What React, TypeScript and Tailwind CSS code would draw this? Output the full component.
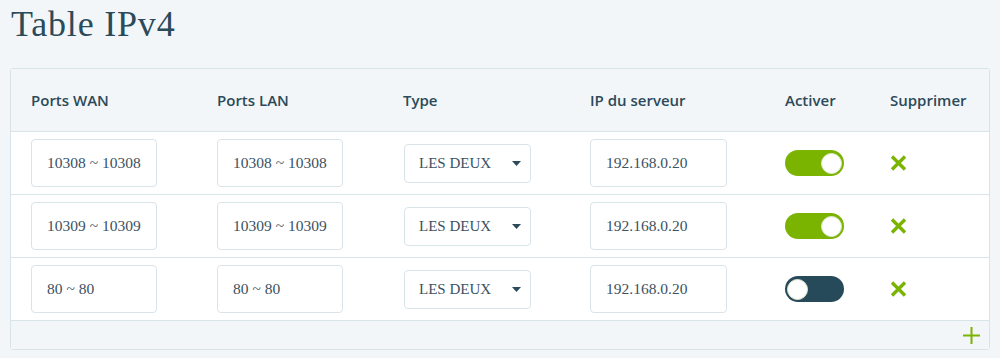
import { useState } from 'react';

type Rule = { wan: string; lan: string; type: string; ip: string; on: boolean };

const initialRules: Rule[] = [
  { wan: '10308 ~ 10308', lan: '10308 ~ 10308', type: 'LES DEUX', ip: '192.168.0.20', on: true },
  { wan: '10309 ~ 10309', lan: '10309 ~ 10309', type: 'LES DEUX', ip: '192.168.0.20', on: true },
  { wan: '80 ~ 80', lan: '80 ~ 80', type: 'LES DEUX', ip: '192.168.0.20', on: false },
];

const headers = ['Ports WAN', 'Ports LAN', 'Type', 'IP du serveur', 'Activer', 'Supprimer'];

const grid = 'grid grid-cols-[186px_186px_187px_195px_105px_1fr] items-center pl-5';

function TextBox({ value, wide }: { value: string; wide?: boolean }) {
  return (
    <div
      className={`flex h-[48px] items-center rounded border border-[#d9e3ea] bg-white pl-[15px] text-[15.5px] text-[#3b5262] ${
        wide ? 'w-[137px]' : 'w-[126px]'
      }`}
      style={{ fontFamily: '"Liberation Serif", serif' }}
    >
      {value}
    </div>
  );
}

function Toggle({ on, onClick }: { on: boolean; onClick: () => void }) {
  return (
    <button
      onClick={onClick}
      className={`flex h-[26px] w-[59px] items-center rounded-full px-[2px] ${
        on ? 'justify-end bg-[#7ab300]' : 'justify-start bg-[#274a5b]'
      }`}
    >
      <span className="h-[21px] w-[21px] rounded-full border border-[#dfe8d0] bg-white" />
    </button>
  );
}

export default function App() {
  const [rules, setRules] = useState(initialRules);

  const flip = (i: number) =>
    setRules((r) => r.map((x, j) => (j === i ? { ...x, on: !x.on } : x)));

  return (
    <div
      className="h-[358px] w-full bg-[#f3f6f8] px-[10px]"
      style={{ fontFamily: '"Open Sans", sans-serif' }}
    >
      <div className="flex h-[68px] items-start">
        <h1
          className="mt-[2px] pl-[1px] text-[36px] leading-[44px] tracking-[0.8px] text-[#2b4a5a]"
          style={{ fontFamily: '"Liberation Serif", serif' }}
        >
          Table IPv4
        </h1>
      </div>

      <div className="overflow-hidden rounded-[3px] border border-[#d9e3ea] bg-white">
        <div className={`${grid} h-[63px] border-b border-[#d9e3ea] bg-[#f3f6f8]`}>
          {headers.map((h) => (
            <div key={h} className="text-[15px] font-semibold text-[#2b4a5a]">
              {h}
            </div>
          ))}
        </div>

        {rules.map((r, i) => (
          <div key={i} className={`${grid} h-[63px] border-b border-[#d9e3ea]`}>
            <TextBox value={r.wan} />
            <TextBox value={r.lan} />
            <div
              className="ml-[1px] flex h-[39px] w-[127px] items-center justify-between rounded border border-[#d9e3ea] pl-[14px] pr-[9px] text-[15px] text-[#3b5262]"
              style={{ fontFamily: '"Liberation Serif", serif' }}
            >
              <span>{r.type}</span>
              <svg width="9" height="5" viewBox="0 0 9 5">
                <path d="M0 0h9L4.5 5z" fill="#2b4a5a" />
              </svg>
            </div>
            <TextBox value={r.ip} wide />
            <Toggle on={r.on} onClick={() => flip(i)} />
            <button
              onClick={() => setRules((x) => x.filter((_, j) => j !== i))}
              className="w-[17px]"
            >
              <svg width="17" height="16" viewBox="0 0 17 16">
                <path d="M2 1.5l13 13M15 1.5l-13 13" stroke="#7ab300" strokeWidth="3.4" />
              </svg>
            </button>
          </div>
        ))}

        <div className="flex h-[28px] items-center justify-end bg-[#f3f6f8] pr-[9px]">
          <svg width="17" height="17" viewBox="0 0 17 17">
            <path d="M8.5 0v17M0 8.5h17" stroke="#7ab300" strokeWidth="2" />
          </svg>
        </div>
      </div>
    </div>
  );
}
